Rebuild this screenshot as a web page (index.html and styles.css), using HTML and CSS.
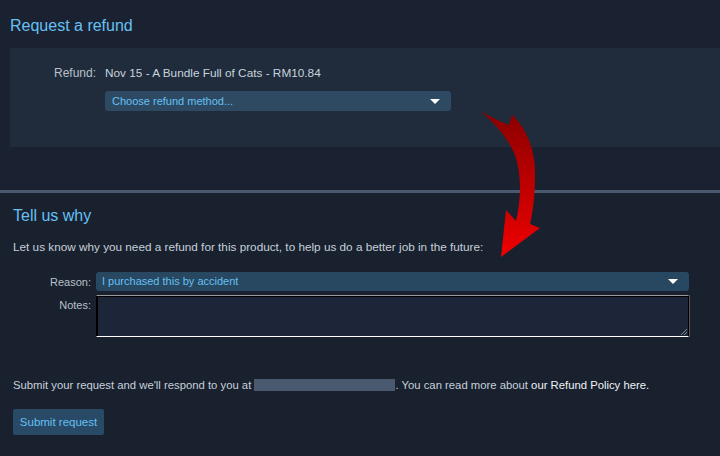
FILE: index.html
```html
<!DOCTYPE html>
<html>
<head>
<meta charset="utf-8">
<link rel="stylesheet" href="styles.css">
</head>
<body>
<div class="page">
  <section class="top">
    <h2 class="title">Request a refund</h2>
    <div class="panel">
      <div class="row">
        <span class="label">Refund:</span>
        <span class="value">Nov 15 - A Bundle Full of Cats - RM10.84</span>
      </div>
      <div class="row">
        <span class="label"></span>
        <div class="select method">Choose refund method...<span class="caret"></span></div>
      </div>
    </div>
  </section>
  <div class="sep"></div>
  <section class="why">
    <h2 class="title">Tell us why</h2>
    <p class="intro">Let us know why you need a refund for this product, to help us do a better job in the future:</p>
    <div class="form">
      <span class="flabel">Reason:</span>
      <div class="select reason">I purchased this by accident<span class="caret"></span></div>
      <span class="flabel">Notes:</span>
      <div class="notes"><span class="grip"></span></div>
    </div>
    <p class="submit-text">Submit your request and we'll respond to you at <span class="redact"></span>. You can read more about <b>our Refund Policy here.</b></p>
    <button class="btn">Submit request</button>
  </section>
  <svg class="arrow" width="80" height="160" viewBox="0 0 80 160">
    <defs>
      <linearGradient id="g" x1="0" y1="0" x2="0" y2="1">
        <stop offset="0" stop-color="#8a0000"/>
        <stop offset="1" stop-color="#f00000"/>
      </linearGradient>
    </defs>
    <path fill="url(#g)" d="M10 11 Q28 21 39 25 L42 15 C55 26 66 50 65 75 C65 95 63 112 60 124 L70 128 L31 157 L36 110 L46 121 C51 100 52 75 45 55 C38 38 24 22 10 11 Z"/>
  </svg>
</div>
</body>
</html>
```
FILE: styles.css
```css
* { box-sizing: border-box; }
html, body { margin: 0; padding: 0; }
body {
  width: 720px;
  height: 456px;
  overflow: hidden;
  background: #19212f;
  font-family: "Liberation Sans", Arial, sans-serif;
  color: #c6d4df;
}
.page { position: relative; width: 720px; height: 456px; }
.top {
  height: 190px;
  background: #1a2231;
  padding: 16px 0 0 10px;
}
.title {
  margin: 0;
  font-weight: normal;
  font-size: 16px;
  line-height: 20px;
  color: #66c0f4;
}
.panel {
  margin-top: 12px;
  height: 99px;
  background: #202b3c;
  padding-top: 18px;
  display: flex;
  flex-direction: column;
  gap: 11px;
}
.row { display: grid; grid-template-columns: 86px 1fr; column-gap: 9px; align-items: center; }
.label { text-align: right; font-size: 12px; line-height: 14px; color: #b8c0c8; }
.value { font-size: 11.8px; line-height: 14px; color: #c6d4df; }
.select {
  position: relative;
  height: 20px;
  line-height: 20px;
  border-radius: 3px;
  background: #2d4a62;
  color: #66c0f4;
  font-size: 11px;
  padding-left: 7px;
}
.method { width: 346px; }
.caret {
  position: absolute;
  right: 11px;
  top: 8px;
  width: 0; height: 0;
  border-left: 5px solid transparent;
  border-right: 5px solid transparent;
  border-top: 5px solid #ffffff;
}
.sep { height: 3px; background: #4a5970; }
.why { padding: 13px 0 0 13px; }
.intro { margin: 14px 0 0; font-size: 11.75px; line-height: 14px; color: #c6d0d9; }
.form {
  margin-top: 18px;
  display: grid;
  grid-template-columns: 78px 593px;
  column-gap: 5px;
  row-gap: 3px;
}
.flabel { text-align: right; font-size: 11px; color: #b8c0c8; line-height: 20px; }
.reason { background: #284760; padding-left: 6px; height: 19px; line-height: 19px; }
.reason .caret { top: 7px; }
.notes {
  position: relative;
  height: 42px;
  background: #1c2638;
  border-top: 1px solid #9a9a9a;
  border-left: 1px solid #000;
  border-right: 1px solid #000;
  border-bottom: 1px solid #ffffff;
  box-shadow: inset 1px 1px 0 #000, 1px 0 0 #555;
}
.grip {
  position: absolute;
  right: 1px; bottom: 1px;
  width: 6px; height: 6px;
  background: linear-gradient(135deg, transparent 45%, #888 45%, #888 55%, transparent 55%, transparent 70%, #888 70%, #888 80%, transparent 80%);
}
.submit-text { margin: 41px 0 0; font-size: 11.3px; line-height: 14px; color: #c6d0d9; }
.submit-text b { color: #eef2f5; font-weight: normal; }
.redact { display: inline-block; width: 141px; height: 12px; background: #495970; vertical-align: -2px; }
.btn {
  margin-top: 17px;
  width: 91px;
  height: 26px;
  border: 0;
  border-radius: 2px;
  background: #294a66;
  color: #66c0f4;
  font-family: "Liberation Sans", Arial, sans-serif;
  font-size: 11.5px;
  padding: 0;
}
.arrow { position: absolute; left: 470px; top: 100px; }
```
